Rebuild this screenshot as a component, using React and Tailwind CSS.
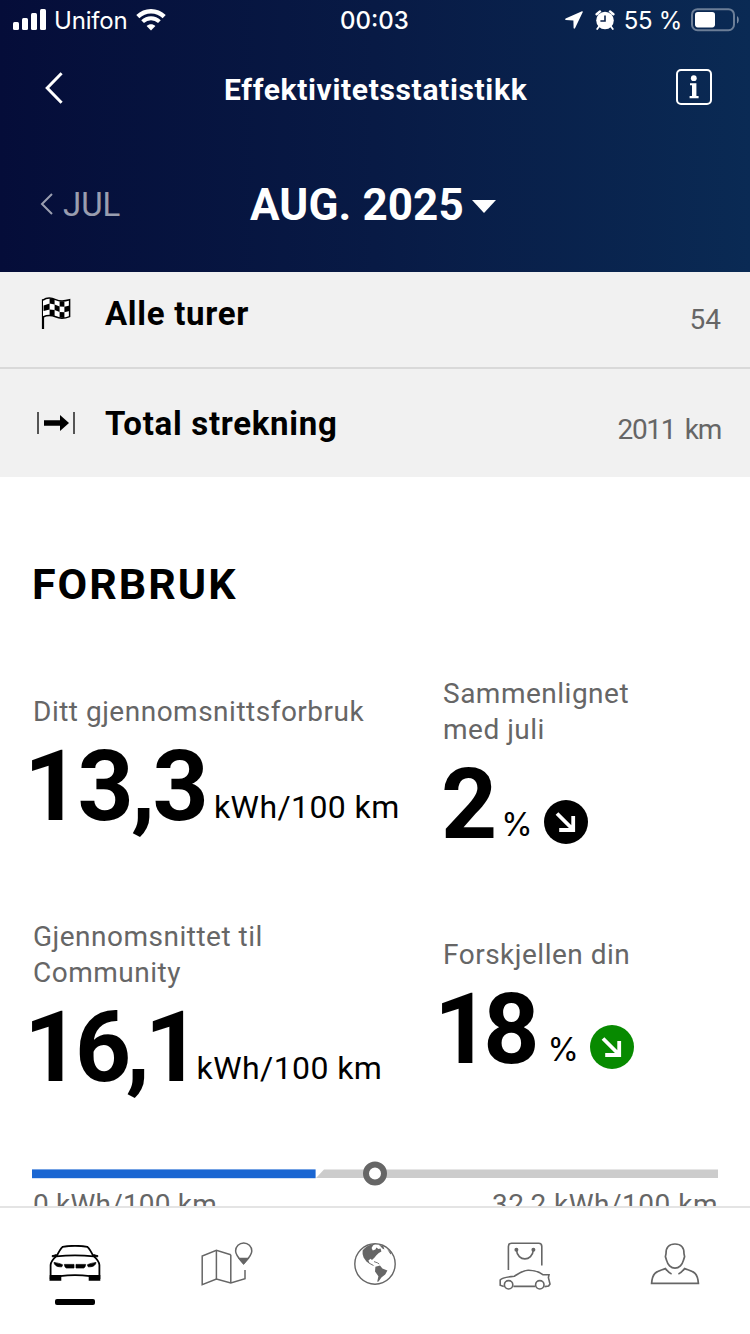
const trips = [
  { icon: "flag", label: "Alle turer", value: "54", valueClass: "" },
  { icon: "distance", label: "Total strekning", value: "2011 km", valueClass: "tracking-[-1.3px] [word-spacing:4px]" },
];

const SignalIcon = () => (
  <svg width="34" height="22" viewBox="0 0 34 22" fill="#fff">
    <rect x="0" y="13" width="6" height="8" rx="1.5" />
    <rect x="9" y="9" width="6" height="12" rx="1.5" />
    <rect x="18" y="4" width="6" height="17" rx="1.5" />
    <rect x="27" y="0" width="6" height="21" rx="1.5" />
  </svg>
);

const WifiIcon = () => (
  <svg width="30" height="22" viewBox="0 0 30 22" fill="none">
    <path d="M1.8 7.6C9.2 0.4 20.8 0.4 28.2 7.6" stroke="#fff" strokeWidth="4.4" />
    <path d="M6.6 12.6C11.4 8.2 18.6 8.2 23.4 12.6" stroke="#fff" strokeWidth="4" />
    <path d="M10.6 17C13.2 14.8 16.8 14.8 19.4 17L15 21.6Z" fill="#fff" />
  </svg>
);

const LocationIcon = () => (
  <svg width="18" height="18" viewBox="0 0 18 18" fill="#fff">
    <path d="M17.8 0.9Q17.9 0.1 17 0.3L0.6 7.4Q-0.4 8.4 0.8 9L8.4 9.6L8.6 17Q9 18.2 10 17.2Z" />
  </svg>
);

const AlarmIcon = () => (
  <svg width="20" height="20" viewBox="0 0 20 20">
    <circle cx="10" cy="10.5" r="8.8" fill="#fff" />
    <path d="M1.6 4.2L5 1.4M18.4 4.2L15 1.4" stroke="#fff" strokeWidth="2.4" strokeLinecap="round" />
    <path d="M4 16.5L2.2 19M16 16.5L17.8 19" stroke="#fff" strokeWidth="1.8" strokeLinecap="round" />
    <path d="M10 5.4V11H5.4" stroke="#0a2149" strokeWidth="1.6" fill="none" />
  </svg>
);

const BatteryIcon = () => (
  <svg width="48" height="24" viewBox="0 0 48 24">
    <rect x="1" y="1.2" width="42" height="21" rx="5.5" fill="none" stroke="#fff" strokeOpacity="0.4" strokeWidth="2" />
    <rect x="4" y="4" width="20" height="15.4" rx="2.8" fill="#fff" />
    <path d="M46 8v7.6c2.4-1.4 2.4-6.2 0-7.6z" fill="#fff" fillOpacity="0.45" />
  </svg>
);

const InfoIcon = () => (
  <svg width="36" height="36" viewBox="0 0 36 36">
    <rect x="1" y="1" width="34" height="34" rx="4" fill="none" stroke="#fff" strokeWidth="2" />
    <circle cx="17.8" cy="9.2" r="2.9" fill="#fff" />
    <path d="M14 14.2H20.4V27H22.6V29.2H13.6V27H16V16.2H14Z" fill="#fff" />
  </svg>
);

const FlagIcon = () => (
  <svg width="30" height="33" viewBox="0 0 30 33">
    <path d="M2 2.2V32" stroke="#000" strokeWidth="2.2" />
    <path
      d="M2 3.2C6 .2 10 .6 14.6 2.6C19 4.8 23 4.4 28.6 2.8V19.6C23 21.8 18 21.4 14.6 19.8C10 18 6 18.2 2 20"
      fill="#fff"
      stroke="#000"
      strokeWidth="1.5"
    />
    <path
      d="M8.6 1.2L13.6 2V7.6L8.6 6.6ZM18.6 4.2L23.4 4.6V9.8L18.6 9.6ZM2.6 8.4L8.6 6.6V12.4L2.6 14ZM13.6 7.6L18.6 9.6V15L13.6 13ZM23.4 9.8L28.6 8.4V14L23.4 15.2ZM8.6 12.4L13.6 13V19L8.6 18ZM18.6 15L23.4 15.2V21L18.6 20.6Z"
      fill="#000"
    />
  </svg>
);

const DistanceIcon = () => (
  <svg width="38" height="22" viewBox="0 0 38 22">
    <path d="M1 0V22M37 0V22" stroke="#555" strokeWidth="2" />
    <path d="M7 8.2H23V3L32 11L23 19V13.8H7Z" fill="#000" />
  </svg>
);

const TrendIcon = ({ color }) => (
  <svg width="44" height="44" viewBox="0 0 44 44">
    <circle cx="22" cy="22" r="22" fill={color} />
    <path d="M13 13.5L28.5 29M15.2 30H29.2V16" stroke="#fff" strokeWidth="3.8" fill="none" />
  </svg>
);

const CarIcon = () => (
  <svg width="52" height="36" viewBox="0 0 52 36" fill="none" stroke="#000" strokeWidth="1.8">
    <path d="M7.6 11.4C9.6 7 11.6 3.6 13.6 1.8C20 .8 32 .8 38.4 1.8C40.4 3.6 42.4 7 44.4 11.4" />
    <path d="M7.2 11.4C20 10 32 10 44.8 11.4C48 14 50 16.6 50.4 20V34M7.2 11.4C4 14 2 16.6 1.6 20V34" />
    <path d="M11 31.2C20 30 32 30 41 31.2" />
    <path d="M1.6 31H11.4V34.8H1.4ZM40.6 31H50.4V34.8H40.6Z" fill="#000" />
    <path d="M3 10.8L7.4 9.6V11.6L3.4 11.8ZM49 10.8L44.6 9.6V11.6L48.6 11.8Z" fill="#000" strokeWidth="1" />
    <path
      d="M5 17.4C8 18 11 18.4 13.6 19.8L12.8 21.8C9 22 5.6 21 5 17.4ZM47 17.4C44 18 41 18.4 38.4 19.8L39.2 21.8C43 22 46.4 21 47 17.4ZM15.4 19.4H25V23H17.4Q15.6 22.6 15.4 19.4ZM36.6 19.4H27V23H34.6Q36.4 22.6 36.6 19.4Z"
      fill="#000"
      strokeWidth="0.7"
    />
  </svg>
);

const MapIcon = () => (
  <svg width="52" height="44" viewBox="0 0 52 44" fill="none" stroke="#666" strokeWidth="1.5">
    <path d="M29.8 12.8L15.4 8.4L1.2 14V42.6L15.4 37L29.8 41L44 36.8V28" />
    <path d="M15.4 8.4V37M29.8 12.8V41" />
    <path d="M42.6 21.6C38 16.4 34.6 13.4 34.6 9A8 8 0 0 1 50.8 9C50.8 13.4 47.2 16.4 42.6 21.6Z" />
    <path d="M38.4 16.6H47L42.6 21.6Z" fill="#666" />
  </svg>
);

const GlobeIcon = () => (
  <svg width="42" height="42" viewBox="0 0 42 42">
    <circle cx="21" cy="21" r="20.2" fill="none" stroke="#666" strokeWidth="1.4" />
    <path
      d="M8.6 7.4C12 3.2 17 .8 21 1L19 2.6L17.6 5L18.8 7.4L21.4 6.4L22.4 4.4L24.4 6L26.6 5.6L27.4 8.6L24.8 10L22.4 12.2L20.6 14.6L18 17L16.6 15.8L14.4 17.4L15.6 20L18.6 21.4L20.4 23L18.6 22.6L15.4 20.8L12.4 18.4L9.6 14.6L8.6 11Z"
      fill="#666"
    />
    <path d="M21.4 23.8L26 22.6L28.4 25.4L33.4 27.4L31.2 31.6L27.4 34.6L24.6 38.4L23.2 38.8L24.4 33.2L21 28.4Z" fill="#666" />
    <path d="M24.6 1.6L29.4 3.2L30.4 6.6L28.4 5.4L26.6 3.6ZM33 6L37.4 10L36.6 11.4Z" fill="#666" />
    <path d="M20 18.6L23.4 19.8L25.2 21" stroke="#666" strokeWidth="0.9" fill="none" />
  </svg>
);

const StoreIcon = () => (
  <svg width="52" height="48" viewBox="0 0 52 48" fill="none" stroke="#666" strokeWidth="1.6">
    <path d="M9.4 28V4.4Q9.4 1.2 12.6 1.2H39.6Q42.8 1.2 42.8 4.4V23.6" />
    <path d="M17.4 7.6C18.4 20 33.4 20 34.4 7.6" />
    <circle cx="17.4" cy="7.8" r="1.2" fill="#666" />
    <circle cx="34.4" cy="7.8" r="1.2" fill="#666" />
    <path d="M4.8 44.4L1.2 43.2V38C3 35.4 9 34.8 15.4 34.2C20 31.4 23.6 28.4 29 28.2C36 28 40 29.8 44.2 32.8H50L49.4 35.6L51 42L49.6 44L45.4 44.6M14.4 44.4H36.2" />
    <circle cx="9.6" cy="42.8" r="4.2" />
    <circle cx="40.8" cy="42.8" r="4.2" />
  </svg>
);

const ProfileIcon = () => (
  <svg width="50" height="44" viewBox="0 0 50 44" fill="none" stroke="#666" strokeWidth="1.7">
    <path d="M25 2C31 2 34.2 5.4 34 11.6L34.6 14.6L33.4 18.4C32.4 22.4 29.2 26.2 25 26.2C20.8 26.2 17.6 22.4 16.6 18.4L15.4 14.6L16 11.6C15.8 5.4 19 2 25 2Z" />
    <path d="M21.6 32C19 31 17.4 29 15.4 26.6C8 29.4 2.4 29 1.6 41.4H48.4C47.6 29 42 29.4 34.6 26.6C32.6 29 31 31 28.4 32" />
  </svg>
);

const Metric = ({ label, value, valueClass, unit, unitClass, trend }) => (
  <div className="flex flex-col gap-[9px]">
    <p className="pl-[1px] text-[28px] leading-[36px] tracking-[0.5px] whitespace-nowrap text-[#666]">{label}</p>
    <div className="flex h-[92px] items-baseline whitespace-nowrap">
      <span className={`text-[98px] leading-[96px] font-bold ${valueClass}`}>{value}</span>
      <span className={`-translate-y-[2px] text-[32px] leading-[32px] ${unitClass}`}>{unit}</span>
      {trend && (
        <span className="translate-y-[6px]">
          <TrendIcon color={trend} />
        </span>
      )}
    </div>
  </div>
);

const App = () => {
  return (
    <div
      className="flex h-[1334px] w-[750px] flex-col overflow-hidden bg-white text-black"
      style={{ fontFamily: 'Roboto, "Noto Sans", sans-serif' }}
    >
      <header className="h-[272px] shrink-0 bg-linear-to-r from-[#050d39] via-[#081a45] to-[#0a2a54] text-white">
        <div
          className="grid h-[40px] grid-cols-3 items-center pr-[11px] pl-[13px] text-[24px]"
          style={{ fontFamily: "Inter, sans-serif" }}
        >
          <div className="flex items-center">
            <SignalIcon />
            <span className="mt-[2px] ml-[7px] tracking-[-0.2px]">Unifon</span>
            <span className="ml-[9px]">
              <WifiIcon />
            </span>
          </div>
          <div className="mt-[2px] pr-[3px] text-center font-medium">00:03</div>
          <div className="flex items-center justify-end">
            <LocationIcon />
            <span className="ml-[12px]">
              <AlarmIcon />
            </span>
            <span className="mt-[2px] ml-[9px] tracking-[-0.3px]">55 %</span>
            <span className="ml-[9px]">
              <BatteryIcon />
            </span>
          </div>
        </div>

        <div className="flex h-[95px] items-center justify-between pr-[38px] pl-[45px]">
          <svg width="18" height="32" viewBox="0 0 18 32" fill="none">
            <path d="M16.6 1.2L2.2 16L16.6 30.8" stroke="#fff" strokeWidth="3" />
          </svg>
          <h1 className="mt-[4px] w-[291px] text-[30px] font-bold tracking-[0.65px] whitespace-nowrap">
            Effektivitetsstatistikk
          </h1>
          <span className="mb-[2px]">
            <InfoIcon />
          </span>
        </div>

        <div className="flex h-[137px] items-center">
          <div className="flex w-[250px] items-center pt-[1px] pl-[40px] text-[33px] text-white/60">
            <svg width="14" height="22" viewBox="0 0 14 22" fill="none">
              <path d="M12 1L2 11L12 21" stroke="currentColor" strokeWidth="2" />
            </svg>
            <span className="mt-[2px] ml-[9px]">JUL</span>
          </div>
          <div className="flex items-center">
            <span className="mt-[2px] w-[214px] text-[44px] font-bold tracking-[0.1px] whitespace-nowrap">AUG. 2025</span>
            <svg className="mt-[6px] ml-[8px]" width="24" height="13" viewBox="0 0 24 13">
              <path d="M0 0H24L12 13Z" fill="#fff" />
            </svg>
          </div>
        </div>
      </header>

      <section className="shrink-0 bg-[#f1f1f1]">
        {trips.map((trip, i) => (
          <div
            key={trip.label}
            className={
              i === 0
                ? "flex h-[97px] items-center border-b-2 border-[#d9d9d9] pr-[29px] pb-[13px]"
                : "flex h-[108px] items-center pr-[29px]"
            }
          >
            <div className="flex w-[105px] items-center pl-[37px]">
              {trip.icon === "flag" ? (
                <span className="ml-[4px]">
                  <FlagIcon />
                </span>
              ) : (
                <DistanceIcon />
              )}
            </div>
            <span className="pt-[1px] text-[33px] font-bold tracking-[0.7px]">{trip.label}</span>
            <span className={`ml-auto pt-[13px] text-[28px] text-[#666] ${trip.valueClass}`}>{trip.value}</span>
          </div>
        ))}
      </section>

      <main className="flex min-h-0 flex-1 flex-col overflow-hidden pl-[32px]">
        <h2 className="mt-[86px] mb-px shrink-0 text-[43px] leading-[42px] font-bold tracking-[2px]">FORBRUK</h2>

        <div className="mt-[70px] grid shrink-0 grid-cols-[410px_1fr] items-center gap-y-[70px]">
          <Metric
            label="Ditt gjennomsnittsforbruk"
            value="13,3"
            valueClass="-ml-[8px] tracking-[-2.7px]"
            unit="kWh/100 km"
            unitClass="ml-[8px] tracking-[0.4px]"
          />
          <Metric
            label={
              <>
                Sammenlignet
                <br />
                med juli
              </>
            }
            value="2"
            valueClass="-ml-px"
            unit="%"
            unitClass="mr-[11px] ml-[4px] font-[Inter]"
            trend="#000"
          />
          <Metric
            label={
              <>
                Gjennomsnittet til
                <br />
                Community
              </>
            }
            value="16,1"
            valueClass="-ml-[8px] tracking-[-5.3px]"
            unit="kWh/100 km"
            unitClass="ml-px tracking-[0.4px]"
          />
          <Metric
            label="Forskjellen din"
            value="18"
            valueClass="-ml-[8px] tracking-[-7px]"
            unit="%"
            unitClass="mr-[11px] ml-[15px] font-[Inter]"
            trend="#078a00"
          />
        </div>

        <div className="mt-[69px] mr-[32px] shrink-0">
          <svg className="block" width="686" height="26" viewBox="0 0 686 26">
            <path d="M284 17L292 8.4H686V17Z" fill="#ccc" />
            <rect x="0" y="8.4" width="283.6" height="8.8" fill="#1a66d2" />
            <circle cx="343" cy="12.6" r="9" fill="#fff" stroke="#666" strokeWidth="6" />
          </svg>
          <div className="flex justify-between pl-px text-[28px] leading-[36px] text-[#666]">
            <span className="tracking-[0.2px]">0 kWh/100 km</span>
            <span className="tracking-[0.5px]">32,2 kWh/100 km</span>
          </div>
        </div>
      </main>

      <nav className="grid h-[128px] shrink-0 grid-cols-5 border-t-2 border-[#e4e4e4] bg-white">
        <div className="flex flex-col items-center">
          <span className="mt-[37px] block h-[37px]">
            <CarIcon />
          </span>
          <span className="mt-[17px] h-[6px] w-[40px] rounded-[2px] bg-black" />
        </div>
        <div className="flex justify-center pt-[34px] pl-[4px]">
          <MapIcon />
        </div>
        <div className="flex justify-center pt-[35px]">
          <GlobeIcon />
        </div>
        <div className="flex justify-center pt-[34px]">
          <StoreIcon />
        </div>
        <div className="flex justify-center pt-[34px]">
          <ProfileIcon />
        </div>
      </nav>
    </div>
  );
};

export default App;
